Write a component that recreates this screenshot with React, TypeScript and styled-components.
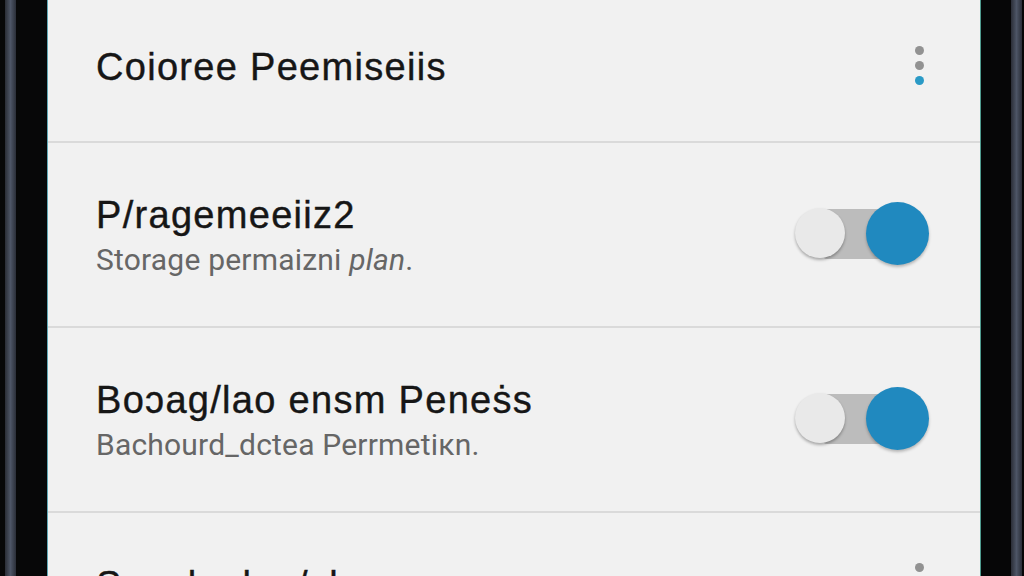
import * as React from "react";
import styled, { createGlobalStyle } from "styled-components";

const GlobalStyle = createGlobalStyle`
  html, body {
    margin: 0;
    padding: 0;
    width: 1024px;
    height: 576px;
    overflow: hidden;
    background: #0c0d10;
  }
`;

type Setting = {
  title: string;
  subtitle?: string;
  italic?: string;
  control: "menu" | "toggle";
};

const settings: Setting[] = [
  { title: "Coioree Peemiseiis", control: "menu" },
  {
    title: "P/ragemeeiiz2",
    subtitle: "Storage permaizni ",
    italic: "plan",
    control: "toggle",
  },
  {
    title: "Bo\u0254ag/lao  ensm Peneṡs",
    subtitle: "Bachourd_dctea Perrmetiкn.",
    control: "toggle",
  },
  { title: "Scoalaoleo/cko", control: "menu" },
];

export default function App() {
  return (
    <>
      <GlobalStyle />
      <Device>
        <LeftBezel>
          <EdgeStrip />
        </LeftBezel>
        <Screen>
          {settings.map((item, i) => (
            <Row key={i} $first={i === 0}>
              <TextBlock>
                <Title>{item.title}</Title>
                {item.subtitle && (
                  <Subtitle>
                    {item.subtitle}
                    {item.italic && <em>{item.italic}</em>}
                    {item.italic && "."}
                  </Subtitle>
                )}
              </TextBlock>
              {item.control === "menu" ? (
                <Kebab>
                  <Dot />
                  <Dot />
                  <Dot $accent />
                </Kebab>
              ) : (
                <Toggle>
                  <Track />
                  <OffKnob />
                  <OnKnob />
                </Toggle>
              )}
            </Row>
          ))}
        </Screen>
        <RightBezel>
          <EdgeStrip />
        </RightBezel>
      </Device>
    </>
  );
}

const Device = styled.div`
  display: flex;
  width: 1024px;
  height: 576px;
  overflow: hidden;
`;

const LeftBezel = styled.div`
  width: 48px;
  flex-shrink: 0;
  display: flex;
  flex-direction: row;
  background: #070708;
  padding-left: 5px;
  box-sizing: border-box;
  border-right: 1px solid #5fa7b5;
`;

const RightBezel = styled.div`
  width: 44px;
  flex-shrink: 0;
  display: flex;
  flex-direction: row-reverse;
  background: #060607;
  padding-right: 2px;
  box-sizing: border-box;
  border-left: 1px solid #4e9a8e;
`;

const EdgeStrip = styled.div`
  width: 11px;
  height: 100%;
  background: linear-gradient(90deg, #2a2d36, #4d5566 50%, #2a2e38);
`;

const Screen = styled.div`
  flex: 1;
  display: flex;
  flex-direction: column;
  background: #f1f1f1;
  overflow: hidden;
  font-family: "Liberation Sans", Arial, sans-serif;
`;

const Row = styled.div<{ $first?: boolean }>`
  flex-shrink: 0;
  height: ${(p) => (p.$first ? "143px" : "185px")};
  display: flex;
  align-items: ${(p) => (p.$first ? "center" : "flex-start")};
  justify-content: space-between;
  padding: ${(p) => (p.$first ? "0 56px 8px 48px" : "50px 56px 0 48px")};
  box-sizing: border-box;
  border-bottom: 2px solid #dadada;
`;

const TextBlock = styled.div`
  display: flex;
  flex-direction: column;
  gap: 6px;
`;

const Title = styled.div`
  font-size: 38px;
  line-height: 44px;
  color: #161616;
  letter-spacing: 1.3px;
  -webkit-text-stroke: 0.4px #161616;
`;

const Subtitle = styled.div`
  font-family: Roboto, "Liberation Sans", sans-serif;
  font-size: 30px;
  line-height: 34px;
  color: #666666;
  letter-spacing: 0.2px;

  em {
    font-style: italic;
  }
`;

const Kebab = styled.div`
  display: flex;
  flex-direction: column;
  align-items: center;
  gap: 6px;
  padding-bottom: 2px;
`;

const Dot = styled.span<{ $accent?: boolean }>`
  width: 9px;
  height: 9px;
  border-radius: 50%;
  background: ${(p) => (p.$accent ? "#2a9ac6" : "#929292")};
`;

const Toggle = styled.div`
  position: relative;
  width: 134px;
  height: 64px;
  margin-top: 9px;
  margin-right: -5px;
`;

const Track = styled.div`
  position: absolute;
  left: 28px;
  top: 7px;
  width: 70px;
  height: 50px;
  background: #bcbcbc;
  border-radius: 4px;
`;

const OffKnob = styled.div`
  position: absolute;
  left: 0;
  top: 6px;
  width: 50px;
  height: 50px;
  border-radius: 50%;
  background: #e9e9e9;
  box-shadow: 0 2px 3px rgba(0, 0, 0, 0.3);
`;

const OnKnob = styled.div`
  position: absolute;
  right: 0;
  top: 0;
  width: 63px;
  height: 63px;
  border-radius: 50%;
  background: #2089bf;
  box-shadow: 0 2px 3px rgba(0, 0, 0, 0.25);
`;
